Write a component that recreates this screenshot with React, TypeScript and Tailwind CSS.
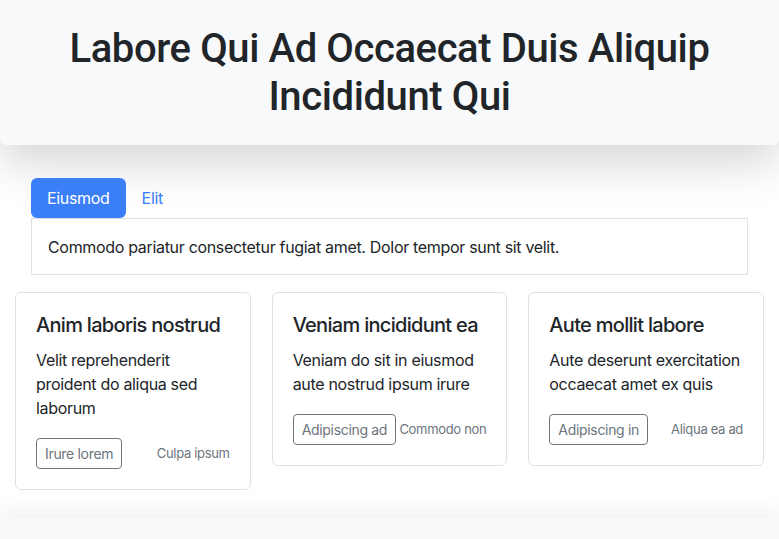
import React from "react";

const cards = [
  { t: "Anim laboris nostrud", b: "Velit reprehenderit proident do aliqua sed laborum", btn: "Irure lorem", link: "Culpa ipsum" },
  { t: "Veniam incididunt ea", b: "Veniam do sit in eiusmod aute nostrud ipsum irure", btn: "Adipiscing ad", link: "Commodo non" },
  { t: "Aute mollit labore", b: "Aute deserunt exercitation occaecat amet ex quis", btn: "Adipiscing in", link: "Aliqua ea ad" },
];

export default function App() {
  return (
    <div className="h-[539px] bg-white text-[#212529] overflow-hidden tracking-[-0.02em]" style={{ fontFamily: "Inter, 'Noto Sans', sans-serif" }}>
      <header className="h-[145px] bg-[#f8f9fa] rounded-b-md shadow-[0_1rem_3rem_rgba(0,0,0,0.175)] flex items-center justify-center px-6">
        <h1 className="text-[40px] leading-[48px] font-medium text-center text-[#212529] max-w-[700px] tracking-[-0.01em]" style={{ fontFamily: "Roboto, 'Liberation Sans', sans-serif" }}>
          Labore Qui Ad Occaecat Duis Aliquip Incididunt Qui
        </h1>
      </header>
      <main className="px-[15px] pt-[33px]">
        <div className="mx-4">
          <div className="flex">
            <button className="h-10 px-4 rounded-md bg-[#3a7ef8] text-white text-base">Eiusmod</button>
            <button className="h-10 pl-4 pr-4 text-[#3a7ef8] text-base">Elit</button>
          </div>
          <div className="border border-[#dee2e6] h-[57px] px-4 flex items-center text-base">
            Commodo pariatur consectetur fugiat amet. Dolor tempor sunt sit velit.
          </div>
        </div>
        <div className="mt-[17px] flex items-start gap-[21px]">
          {cards.map((c) => (
            <div key={c.t} className="w-[236px] border border-[#dee2e6] rounded-md bg-white px-5 pt-[19px] pb-[20px]">
              <h5 className="text-[20px] leading-[26px] font-medium mb-[10px] whitespace-nowrap tracking-[-0.035em]">{c.t}</h5>
              <p className="text-base leading-6 mb-[18px]">{c.b}</p>
              <div className="flex items-center justify-between">
                <button className="h-[31px] px-2 border border-[#6c757d] rounded text-[#6c757d] text-sm whitespace-nowrap shrink-0">{c.btn}</button>
                <span className="text-[13px] text-[#6c757d] whitespace-nowrap">{c.link}</span>
              </div>
            </div>
          ))}
        </div>
      </main>
      <footer className="mt-[28px] h-[40px] bg-[#f8f9fa] shadow-[0_-0.5rem_1.5rem_rgba(0,0,0,0.06)]"></footer>
    </div>
  );
}
